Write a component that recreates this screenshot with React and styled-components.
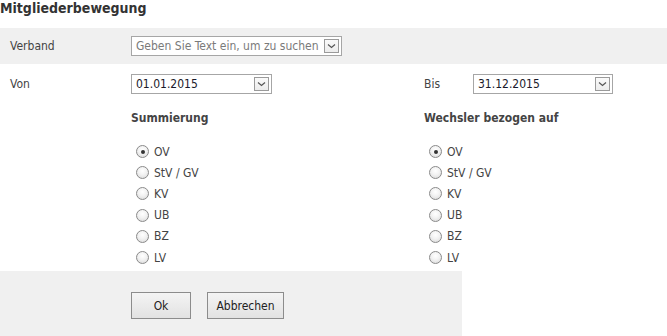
import React from "react";
import styled, { createGlobalStyle } from "styled-components";

const GlobalStyle = createGlobalStyle`
  html, body {
    margin: 0;
    padding: 0;
    background: #ffffff;
  }
  body {
    font-family: "DejaVu Sans Condensed", "DejaVu Sans", sans-serif;
    font-size: 12px;
    color: #444;
  }
`;

const OPTIONS = ["OV", "StV / GV", "KV", "UB", "BZ", "LV"];

const Chevron = () => (
  <svg width="9" height="6" viewBox="0 0 9 6">
    <path d="M1 1.5 L4.5 4.5 L8 1.5" fill="none" stroke="#555" strokeWidth="1.2" />
  </svg>
);

const Combo = ({ value, placeholder, width }) => (
  <ComboBox $width={width}>
    <ComboText $placeholder={!value}>{value || placeholder}</ComboText>
    <DropButton>
      <Chevron />
    </DropButton>
  </ComboBox>
);

const RadioGroup = ({ title, selected }) => (
  <Group>
    <GroupTitle>{title}</GroupTitle>
    <RadioList>
      {OPTIONS.map((opt) => (
        <RadioRow key={opt}>
          <RadioDot $checked={opt === selected} />
          <RadioLabel>{opt}</RadioLabel>
        </RadioRow>
      ))}
    </RadioList>
  </Group>
);

const App = () => {
  return (
    <Page>
      <GlobalStyle />
      <Title>Mitgliederbewegung</Title>
      <Band>
        <Label>Verband</Label>
        <Combo placeholder="Geben Sie Text ein, um zu suchen" width={211} />
      </Band>
      <DateRow>
        <Label>Von</Label>
        <Combo value="01.01.2015" width={141} />
        <Label>Bis</Label>
        <Combo value="31.12.2015" width={140} />
      </DateRow>
      <Options>
        <span />
        <RadioGroup title="Summierung" selected="OV" />
        <RadioGroup title="Wechsler bezogen auf" selected="OV" />
      </Options>
      <Footer>
        <Button $width={60}>Ok</Button>
        <Button $width={77}>Abbrechen</Button>
      </Footer>
    </Page>
  );
};

const Page = styled.div`
  width: 667px;
  height: 336px;
  overflow: hidden;
`;

const Title = styled.h1`
  margin: 0;
  height: 28px;
  font-size: 14px;
  font-weight: bold;
  line-height: 16px;
  color: #333;
`;

const Band = styled.div`
  display: grid;
  grid-template-columns: 121px auto;
  align-items: center;
  height: 36px;
  padding-left: 10px;
  box-sizing: border-box;
  background: #f0f0f0;
`;

const Label = styled.span`
  color: #444;
  line-height: 16px;
`;

const DateRow = styled.div`
  display: grid;
  grid-template-columns: 121px 293px 49px auto;
  align-items: center;
  margin-top: 10px;
  padding-left: 10px;
`;

const ComboBox = styled.div`
  display: flex;
  align-items: center;
  width: ${(p) => p.$width}px;
  height: 20px;
  box-sizing: border-box;
  border: 1px solid #a6a6a6;
  background: #fff;
  padding: 0 2px 0 4px;
`;

const ComboText = styled.span`
  flex: 1;
  white-space: nowrap;
  overflow: hidden;
  color: ${(p) => (p.$placeholder ? "#7a7a7a" : "#1a1a2a")};
  font-size: 12px;
  line-height: 16px;
`;

const DropButton = styled.span`
  display: flex;
  align-items: center;
  justify-content: center;
  width: 15px;
  height: 14px;
  box-sizing: border-box;
  border: 1px solid #9a9a9a;
  background: linear-gradient(#fafafa, #ececec);
`;

const Options = styled.div`
  display: grid;
  grid-template-columns: 131px 293px auto;
  margin-top: 16px;
`;

const Group = styled.div`
  display: flex;
  flex-direction: column;
`;

const GroupTitle = styled.div`
  font-weight: bold;
  color: #444;
  line-height: 16px;
  margin-bottom: 15px;
`;

const RadioList = styled.div`
  display: flex;
  flex-direction: column;
  padding-left: 5px;
`;

const RadioRow = styled.div`
  display: flex;
  align-items: center;
  gap: 5px;
  height: 21.2px;
`;

const RadioDot = styled.span`
  position: relative;
  width: 13px;
  height: 13px;
  box-sizing: border-box;
  border-radius: 50%;
  border: 1px solid #8a8a8a;
  background: radial-gradient(circle at 50% 35%, #ffffff 0%, #f2f2f2 45%, #d6d6d6 100%);

  &::after {
    content: "";
    display: ${(p) => (p.$checked ? "block" : "none")};
    position: absolute;
    left: 3.5px;
    top: 3.5px;
    width: 4px;
    height: 4px;
    border-radius: 50%;
    background: #333;
  }
`;

const RadioLabel = styled.span`
  color: #444;
  line-height: 16px;
`;

const Footer = styled.div`
  display: flex;
  gap: 16px;
  width: 462px;
  height: 80px;
  margin-top: 3px;
  padding: 21px 0 0 131px;
  box-sizing: border-box;
  background: #f0f0f0;
`;

const Button = styled.button`
  width: ${(p) => p.$width}px;
  height: 27px;
  padding: 0;
  font-family: inherit;
  font-size: 12px;
  color: #222;
  border: 1px solid #8c8c8c;
  border-radius: 0;
  background: linear-gradient(#f4f4f4, #e2e2e2);
`;

export default App;
